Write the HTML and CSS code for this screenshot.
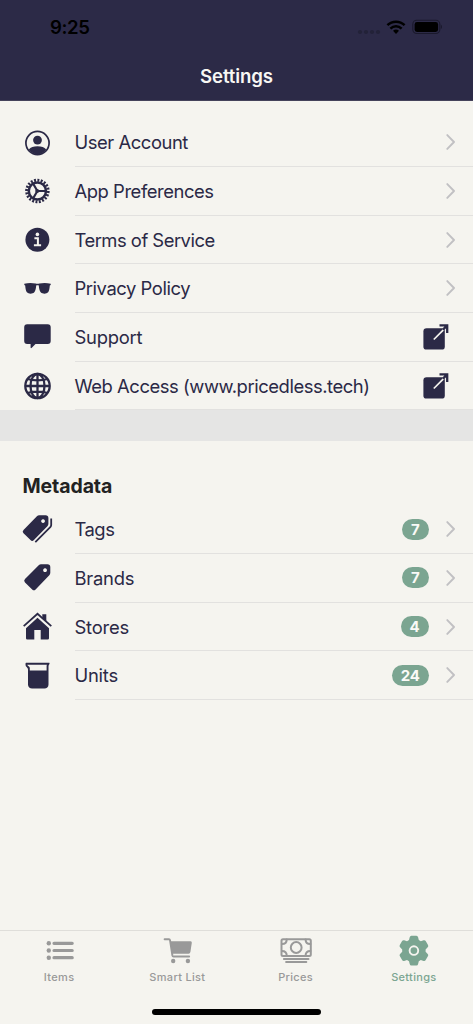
FILE: index.html
```
<!DOCTYPE html>
<html lang="en">
<head>
<meta charset="utf-8">
<meta name="viewport" content="width=device-width, initial-scale=1">
<title>Settings</title>
<link rel="stylesheet" href="styles.css">
</head>
<body>
<div class="screen">
  <header class="header">
    <div class="status">
      <span class="time">9:25</span>
      <svg class="status-icons" width="88" height="20" viewBox="0 0 88 20">
        <g fill="#232238"><circle cx="6" cy="15" r="2.1"/><circle cx="12" cy="15" r="2.1"/><circle cx="18" cy="15" r="2.1"/><circle cx="24" cy="15" r="2.1"/></g>
        <g fill="none" stroke="#000" stroke-width="2.5"><path d="M33.4 8.1a12.4 12.4 0 0 1 17.2 0"/><path d="M36.4 11.6a8 8 0 0 1 11.2 0"/></g>
        <path d="M39 13.7q3-2.300 6 0l-3 3.200z"/>
        <rect x="58.8" y="3.3" width="27" height="13.2" rx="4" fill="none" stroke="#1a192c" stroke-width="1.1"/>
        <rect x="60.6" y="5" width="23.5" height="10" rx="2.4"/>
        <path d="M86.9 7.8q1.100.6 1.100 2.100t-1.100 2.200z" fill="#1a192c"/>
      </svg>
    </div>
    <h1 class="title">Settings</h1>
  </header>
  <main class="main">
    <section class="group account">
      <div class="row">
        <svg class="icon" viewBox="0 0 32 32"><circle cx="16.5" cy="16" r="11.6" fill="none" stroke="currentColor" stroke-width="1.7"/><circle cx="16.5" cy="13.1" r="4.4"/><path d="M7.8 22.6q2.700-3.300 8.700-3.300t8.700 3.300q-3.400 4.800-8.700 4.800t-8.700-4.800z"/></svg>
        <div class="cell"><span class="label">User Account</span><svg class="chevron" viewBox="0 0 10 16"><path d="M1.3 1.1 8 8 1.3 14.9"/></svg></div>
      </div>
      <div class="row">
        <svg class="icon" viewBox="0 0 32 32"><g fill="none" stroke="currentColor"><circle cx="16.4" cy="16" r="8.6" stroke-width="2.5"/><circle cx="16.4" cy="16" r="10.8" stroke-width="2.9" pathLength="40" stroke-dasharray="1.15 .85"/><path d="M16.4 16H25M16.4 16 12.1 8.6M16.4 16l-4.3 7.4" stroke-width="2.1"/></g><circle cx="16.2" cy="16" r="2"/></svg>
        <div class="cell"><span class="label">App Preferences</span><svg class="chevron" viewBox="0 0 10 16"><path d="M1.3 1.1 8 8 1.3 14.9"/></svg></div>
      </div>
      <div class="row">
        <svg class="icon" viewBox="0 0 32 32"><circle cx="16.4" cy="15.8" r="12"/><circle cx="16.4" cy="10.4" r="1.8" class="light"/><path d="M13.4 14.2h3.500v6.600M12.900 21.200h7.200" class="light-line" stroke-width="2"/></svg>
        <div class="cell"><span class="label snug">Terms of Service</span><svg class="chevron" viewBox="0 0 10 16"><path d="M1.3 1.1 8 8 1.3 14.9"/></svg></div>
      </div>
      <div class="row">
        <svg class="icon" viewBox="0 0 32 32"><path d="M3.300 10.700q6-1.300 11.300-.1 1.900.5 3.800 0 5.300-1.200 11.300.1V12l-.9.5c-.2 3.400-.8 5.800-1.700 6.800-1.400 1.700-5.500 1.800-7.200.2-1.300-1.300-2-4-2.100-6.900-.6-.6-2-.6-2.600 0-.1 2.900-.8 5.600-2.100 6.900-1.700 1.600-5.800 1.500-7.200-.2-.9-1-1.500-3.400-1.700-6.800L3.300 12z"/></svg>
        <div class="cell"><span class="label">Privacy Policy</span><svg class="chevron" viewBox="0 0 10 16"><path d="M1.3 1.1 8 8 1.3 14.9"/></svg></div>
      </div>
      <div class="row">
        <svg class="icon" viewBox="0 0 32 32"><path d="M6.200 3.200h20.500q3 0 3 3V20q0 3-3 3H14.500l-3.700 3.800q-1.200 1-1.200-.5V23H6.200q-3 0-3-3V6.200q0-3 3-3z"/></svg>
        <div class="cell"><span class="label loose">Support</span><svg class="external" viewBox="0 0 28 28"><rect x="1.4" y="5.2" width="21.4" height="21.4" rx="3.2"/><path d="m11.800 16.500 9.600-9.600" class="light-line" stroke-width="1.7"/><path d="M17.500 2.400h7.700v7.700M25 2.600l-4 4" fill="none" stroke="currentColor" stroke-width="2.3"/></svg></div>
      </div>
      <div class="row">
        <svg class="icon" viewBox="0 0 32 32"><g fill="none" stroke="currentColor" stroke-width="2.3"><circle cx="16.5" cy="16" r="12.2"/><ellipse cx="16.5" cy="16" rx="7" ry="12"/><path d="M16.500 3.600v25M4 16h25M6.300 9q10.200 2.800 20.400 0M6.300 23q10.200-2.800 20.400 0"/></g></svg>
        <div class="cell"><span class="label">Web Access (www.pricedless.tech)</span><svg class="external" viewBox="0 0 28 28"><rect x="1.4" y="5.2" width="21.4" height="21.4" rx="3.2"/><path d="m11.800 16.500 9.600-9.600" class="light-line" stroke-width="1.7"/><path d="M17.500 2.400h7.700v7.700M25 2.600l-4 4" fill="none" stroke="currentColor" stroke-width="2.3"/></svg></div>
      </div>
    </section>
    <div class="divider"></div>
    <section class="group">
      <h2 class="heading">Metadata</h2>
      <div class="row">
        <svg class="icon" viewBox="0 0 32 32"><path fill-rule="evenodd" d="M15.9 2.2q1-.9 2.300-.9h6.400q2.700 0 2.800 2.800v5.700q0 1.400-1 2.400L12.900 26.100q-1.700 1.700-3.400 0l-7-6.800q-1.700-1.800 0-3.400zM22 5.200a1.900 1.900 0 1 0 .1 0z"/><path d="M30.200 4.400v6.700q0 1-.7 1.700L14.300 28.100" fill="none" stroke="currentColor" stroke-width="1.8"/></svg>
        <div class="cell"><span class="label snug">Tags</span><span class="badge">7</span><svg class="chevron" viewBox="0 0 10 16"><path d="M1.3 1.1 8 8 1.3 14.9"/></svg></div>
      </div>
      <div class="row">
        <svg class="icon" viewBox="0 0 32 32"><path fill-rule="evenodd" d="M17.700 3.200q1-.9 2.300-.9h6.500q2.700 0 2.800 2.800v5.700q0 1.400-1 2.400L14.600 27.400q-1.700 1.700-3.400 0L4 20.500q-1.700-1.800 0-3.400zM24 6.300a1.900 1.900 0 1 0 .1 0z"/></svg>
        <div class="cell"><span class="label loose">Brands</span><span class="badge">7</span><svg class="chevron" viewBox="0 0 10 16"><path d="M1.3 1.1 8 8 1.3 14.9"/></svg></div>
      </div>
      <div class="row">
        <svg class="icon" viewBox="0 0 32 32"><path d="M16.500 6.700 28 17.200v10q0 1.300-1.300 1.300h-7v-9.600h-6.400v9.600h-7Q5 28.500 5 27.200v-10z"/><path d="M21.300 3.300h4v7.200l-4-3.500z"/><path d="M2.700 15.200 16.500 2.800l13.800 12.400" fill="none" stroke="currentColor" stroke-width="1.8"/></svg>
        <div class="cell"><span class="label loose">Stores</span><span class="badge wide">4</span><svg class="chevron" viewBox="0 0 10 16"><path d="M1.3 1.1 8 8 1.3 14.9"/></svg></div>
      </div>
      <div class="row">
        <svg class="icon" viewBox="0 0 32 32"><path d="M5 2.800h23.300q.6.300 0 1.400-.8.800-.8 2v18.300q0 2-1.200 3t-2.700 1H11.100q-1.800 0-2.900-1.100T7 24.700V9.600q0-1.600-1.400-2.700Q4.500 6 4.500 4.400 4.400 3.200 5 2.800z"/><path d="M6.300 4.700h19.600q-.3.800-.3 1.800v4H8.800V8.100q0-1-1.200-1.800T6.300 4.700z" class="light"/></svg>
        <div class="cell"><span class="label loose">Units</span><span class="badge">24</span><svg class="chevron" viewBox="0 0 10 16"><path d="M1.3 1.1 8 8 1.3 14.9"/></svg></div>
      </div>
    </section>
  </main>
  <nav class="tabs">
    <div class="tab">
      <svg class="tab-icon" viewBox="0 0 36 34"><g fill="none" stroke="currentColor" stroke-width="3.2" stroke-linecap="round"><path d="M14 10.300h18.200M14 17.500h18.200M14 24.700h18.200"/></g><circle cx="8.8" cy="10.3" r="2.2"/><circle cx="8.8" cy="17.5" r="2.2"/><circle cx="8.8" cy="24.7" r="2.2"/></svg>
      <span>Items</span>
    </div>
    <div class="tab">
      <svg class="tab-icon" viewBox="0 0 36 34"><path d="M11 8.300h20.600q1.400 0 1.200 1.500l-1.400 9.300q-.3 1.600-1.800 1.600H13.200z"/><path d="M5.600 6.200H10q.8 0 1 1l2.400 15.300q.2 1 1.200 1h15.600" fill="none" stroke="currentColor" stroke-width="1.9" stroke-linecap="round"/><circle cx="14.2" cy="28" r="2.2"/><circle cx="28.9" cy="28" r="2.2"/></svg>
      <span>Smart List</span>
    </div>
    <div class="tab">
      <svg class="tab-icon" viewBox="0 0 36 34"><g fill="none" stroke="currentColor" stroke-width="2"><rect x="4.5" y="6.2" width="29.3" height="16.7" rx="1.5"/><circle cx="19.2" cy="14.5" r="5.4"/><path d="M4.900 11.100q4.800 0 4.800-4.600M33.400 11.100q-4.800 0-4.800-4.600M4.900 18q4.800 0 4.800 4.600M33.400 18q-4.800 0-4.800 4.600M6.900 26h24.600M9.100 29.100h20.200" stroke-linecap="round"/></g></svg>
      <span>Prices</span>
    </div>
    <div class="tab active">
      <svg class="tab-icon" viewBox="0 0 36 34"><path d="M14.700 4.200q.3-1.500 1.700-1.500h5q1.400 0 1.700 1.500l.7 2.800 2 1.200 2.800-.9q1.400-.4 2.100.8l2.300 4q.7 1.200-.3 2.200l-2.100 2.100v2.400l2.100 2.100q1 1 .3 2.200l-2.300 4q-.7 1.200-2.100.8l-2.800-.9-2 1.200-.7 2.800q-.3 1.500-1.700 1.500h-5q-1.400 0-1.700-1.500L14 28.200 12 27l-2.800.9q-1.400.4-2.100-.8l-2.300-4q-.7-1.200.3-2.200l2.100-2.100v-2.400l-2.100-2.100q-1-1-.3-2.200l2.300-4q.7-1.200 2.100-.8l2.800.9 2-1.200z"/><circle cx="18.9" cy="17.6" r="4.3" fill="none" stroke="#f5f4ef" stroke-width="1.9"/></svg>
      <span>Settings</span>
    </div>
    <div class="home"></div>
  </nav>
</div>
</body>
</html>
```
FILE: styles.css
```
* { box-sizing: border-box; }
body { margin: 0; background: #f5f4ef; font-family: Inter, "Liberation Sans", sans-serif; color: #2b2946; }
.screen { display: flex; flex-direction: column; height: 1024px; }
.header { flex: none; height: 101px; background: #2c2a47; border-bottom: 1px solid #45435b; }
.status { display: flex; justify-content: space-between; align-items: center; height: 54px; padding: 0 31px 0 50px; color: #000; }
.time { font-size: 18.6px; font-weight: 600; letter-spacing: -.35px; }
.title { margin: 0; color: #f8f7f4; font-size: 18.6px; font-weight: 600; line-height: 45px; text-align: center; letter-spacing: -.1px; }
.main { flex: 1; }
.account { padding-top: 17.5px; }
.row { display: flex; align-items: center; height: 48.65px; padding-left: 21px; }
.icon { flex: none; width: 32px; height: 32px; margin-right: 21.5px; fill: currentColor; }
.cell { flex: 1; display: flex; align-items: center; height: 100%; padding-right: 17px; border-bottom: 1px solid #e2e1df; }
.label { flex: 1; font-size: 18.4px; line-height: 22px; letter-spacing: -.44px; white-space: nowrap; }
.snug { letter-spacing: -.5px; }
.loose { letter-spacing: -.22px; }
.chevron { width: 10px; height: 16px; fill: none; stroke: #c1c0c3; stroke-width: 1.9; stroke-linecap: round; stroke-linejoin: round; }
.external { width: 28px; height: 28px; margin-right: 6px; fill: currentColor; }
.light { fill: #f5f4ef; }
.light-line { fill: none; stroke: #f5f4ef; }
.badge { min-width: 26.5px; height: 21px; margin-right: 17.5px; padding: 0 8.5px; border-radius: 11px; background: #7ba591; color: #fafaf7; font-size: 15px; font-weight: 700; line-height: 21px; text-align: center; }
.wide { min-width: 28px; }
.divider { height: 31px; background: #e5e5e4; }
.heading { margin: 0; padding: 26px 0 0 22.5px; height: 64.1px; color: #222; font-size: 19.5px; font-weight: 700; line-height: 38px; letter-spacing: -.1px; }
.tabs { position: relative; display: flex; height: 94px; border-top: 1px solid #dfdeda; }
.tab { flex: 1; display: flex; flex-direction: column; align-items: center; padding-top: 2px; color: #999; font-size: 11px; font-weight: 500; line-height: 16px; letter-spacing: .32px; }
.tab-icon { width: 36px; height: 34px; margin-right: 1.5px; fill: currentColor; }
.tab span { margin-top: 2px; }
.tab.active { color: #7ba591; }
.home { position: absolute; left: 152px; top: 78px; width: 169px; height: 6px; border-radius: 3px; background: #000; }
```
